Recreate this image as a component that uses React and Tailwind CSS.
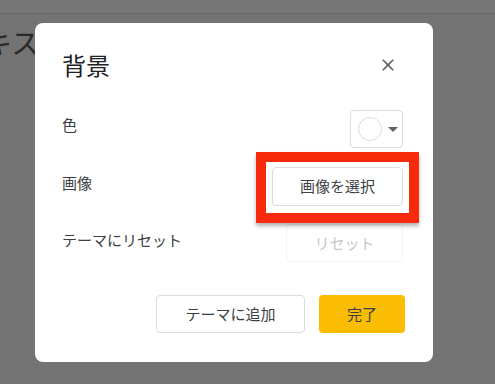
import React from "react";

const jp = { fontFamily: '"Noto Sans CJK JP", "Noto Sans", sans-serif' };

const CloseIcon = () => (
  <svg width="20" height="20" viewBox="0 0 24 24" fill="#5f6368">
    <path d="M19 6.41 17.59 5 12 10.59 6.41 5 5 6.41 10.59 12 5 17.59 6.41 19 12 13.41 17.59 19 19 17.59 13.41 12z" />
  </svg>
);

const App = () => {
  return (
    <div className="relative h-[384px] w-full overflow-hidden bg-[#737373]" style={jp}>
      {/* page behind the overlay */}
      <div className="h-[14px] border-b border-[#646464] bg-[#767676]" />
      <div className="ml-[-44px] mt-[10px] text-[28px] leading-[36px] text-[#2a2a2a]">テキスト</div>

      {/* Dialog */}
      <div className="absolute left-[35px] top-[23px] flex h-[339px] w-[398px] flex-col rounded-[8px] bg-white pl-[27px] pr-[28px] pt-[26px]">
        <div className="flex h-[32px] items-center justify-between">
          <h2 className="text-[24px] leading-[32px] text-[#202124]">背景</h2>
          <button className="mr-[7px] flex items-center">
            <CloseIcon />
          </button>
        </div>

        <div className="mt-[29px] flex flex-col gap-[19px] pr-[2px]">
          <div className="flex h-[38px] items-center justify-between">
            <span className="mb-[7px] text-[15px] text-[#3c4043]">色</span>
            <button className="flex h-[38px] w-[53px] items-center gap-[6px] rounded-[4px] border border-[#dadce0] pl-[7px]">
              <span className="h-[24px] w-[24px] rounded-full border border-[#dadce0] bg-white" />
              <svg width="10" height="5" viewBox="0 0 10 5">
                <path d="M0 0h10L5 5z" fill="#5f6368" />
              </svg>
            </button>
          </div>

          <div className="flex h-[38px] items-center justify-between">
            <span className="mb-[6px] text-[15px] text-[#3c4043]">画像</span>
            <div className="relative">
              <div className="absolute -bottom-[17px] -left-[16px] -right-[16px] -top-[15px] border-[10px] border-[#f72a0b] shadow-[0_3px_4px_rgba(0,0,0,0.3)]" />
              <button className="relative flex h-[39px] w-[131px] items-center justify-center rounded-[4px] border border-[#dadce0] bg-white text-[15px] text-[#3c4043]">
                画像を選択
              </button>
            </div>
          </div>

          <div className="flex h-[38px] items-center justify-between">
            <span className="mb-[6px] text-[15px] text-[#3c4043]">テーマにリセット</span>
            <button className="flex h-[38px] w-[117px] items-center justify-center rounded-[4px] border border-[#f1f3f4] text-[15px] text-[#c4c7c5]">
              リセット
            </button>
          </div>
        </div>

        <div className="mt-[33px] flex justify-end gap-[14px]">
          <button className="flex h-[38px] w-[149px] items-center justify-center rounded-[4px] border border-[#dadce0] text-[15px] text-[#3c4043]">
            テーマに追加
          </button>
          <button className="flex h-[38px] w-[86px] items-center justify-center rounded-[4px] bg-[#fbbc04] text-[15px] text-[#3c4043]">
            完了
          </button>
        </div>
      </div>
    </div>
  );
};

export default App;
